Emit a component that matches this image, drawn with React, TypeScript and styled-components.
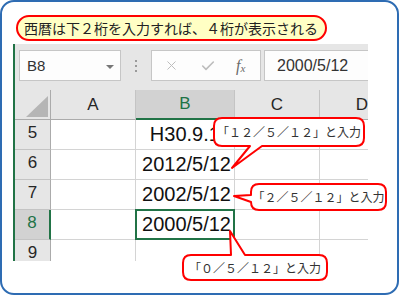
import React from "react";
import styled, { createGlobalStyle } from "styled-components";
import { X, Check } from "lucide-react";

const GlobalStyle = createGlobalStyle`
  html, body {
    margin: 0;
    padding: 0;
    background: #ffffff;
  }
  body {
    font-family: "Liberation Sans", "Noto Sans CJK JP", sans-serif;
  }
`;

const GREEN = "#217346";

type TailSide = "top" | "bottom" | "left";

interface CalloutData {
  x: number;
  y: number;
  w: number;
  h: number;
  side: TailSide;
  a: number;
  b: number;
  tx: number;
  ty: number;
  text: string;
}

const callouts: CalloutData[] = [
  { x: 213, y: 117, w: 152, h: 30, side: "bottom", a: 37, b: 49, tx: 19, ty: 51, text: "「１２／５／１２」と入力" },
  { x: 250, y: 183, w: 137, h: 28, side: "left", a: 12, b: 19, tx: -16, ty: 13, text: "「２／５／１２」と入力" },
  { x: 182, y: 254, w: 146, h: 27, side: "top", a: 49, b: 63, tx: 48, ty: -23, text: "「０／５／１２」と入力" },
];

// rounded box with a wedge tail, drawn clockwise
const calloutPath = (c: CalloutData) => {
  const r = 8;
  const x0 = 1;
  const y0 = 1;
  const x1 = c.w - 1;
  const y1 = c.h - 1;
  let d = `M ${x0 + r} ${y0}`;
  if (c.side === "top") d += ` L ${c.a} ${y0} L ${c.tx} ${c.ty} L ${c.b} ${y0}`;
  d += ` L ${x1 - r} ${y0} Q ${x1} ${y0} ${x1} ${y0 + r}`;
  d += ` L ${x1} ${y1 - r} Q ${x1} ${y1} ${x1 - r} ${y1}`;
  if (c.side === "bottom") d += ` L ${c.b} ${y1} L ${c.tx} ${c.ty} L ${c.a} ${y1}`;
  d += ` L ${x0 + r} ${y1} Q ${x0} ${y1} ${x0} ${y1 - r}`;
  if (c.side === "left") d += ` L ${x0} ${c.b} L ${c.tx} ${c.ty} L ${x0} ${c.a}`;
  d += ` L ${x0} ${y0 + r} Q ${x0} ${y0} ${x0 + r} ${y0} Z`;
  return d;
};

const columns = ["A", "B", "C", "D"];
const rows = [
  { n: 5, b: "H30.9.12" },
  { n: 6, b: "2012/5/12" },
  { n: 7, b: "2002/5/12" },
  { n: 8, b: "2000/5/12" },
  { n: 9, b: "" },
];

export default function App() {
  return (
    <>
      <GlobalStyle />
      <Page>
        <Frame>
          <Title>西暦は下２桁を入力すれば、４桁が表示される</Title>
          <Excel>
            <FormulaBar>
              <NameBox>
                B8
                <DropArrow />
              </NameBox>
              <Separator>
                <Dot />
                <Dot />
                <Dot />
              </Separator>
              <FxBox>
                <X size={15} strokeWidth={1.6} color="#bdbdbd" />
                <Check size={16} strokeWidth={2.4} color="#bdbdbd" />
                <Fx>
                  f<sub>x</sub>
                </Fx>
              </FxBox>
              <FormulaBox>2000/5/12</FormulaBox>
            </FormulaBar>
            <Grid>
              <Corner>
                <svg width="22" height="21" viewBox="0 0 22 21">
                  <polygon points="22,0 22,21 0,21" fill="#b5b5b5" />
                </svg>
              </Corner>
              {columns.map((c) => (
                <ColHead key={c} $active={c === "B"}>
                  {c}
                </ColHead>
              ))}
              {rows.map((r) => (
                <React.Fragment key={r.n}>
                  <RowHead $active={r.n === 8}>{r.n}</RowHead>
                  <Cell />
                  <Cell $active={r.n === 8}>{r.b}</Cell>
                  <Cell />
                  <Cell />
                </React.Fragment>
              ))}
            </Grid>
          </Excel>
        </Frame>

        {callouts.map((c, i) => (
          <Callout key={i} style={{ left: c.x, top: c.y, width: c.w, height: c.h }}>
            <svg width={c.w} height={c.h} style={{ overflow: "visible", position: "absolute", left: 0, top: 0 }}>
              <path d={calloutPath(c)} fill="#ffffff" stroke="#ff0000" strokeWidth={2} strokeLinejoin="round" />
            </svg>
            <CalloutText>{c.text}</CalloutText>
          </Callout>
        ))}
      </Page>
    </>
  );
}

const Page = styled.div`
  position: relative;
  width: 401px;
  height: 295px;
  overflow: hidden;
`;

const Frame = styled.div`
  box-sizing: border-box;
  width: 399px;
  height: 295px;
  border: 2px solid #2e6cb3;
  border-radius: 14px;
  padding: 13px 0 0 11px;
`;

const Title = styled.div`
  display: inline-flex;
  align-items: center;
  box-sizing: border-box;
  height: 26px;
  margin-left: 3px;
  padding: 0 7px 0 6px;
  border: 2px solid #ff0000;
  border-radius: 13px;
  background: #ffffc4;
  color: #222222;
  font-family: "Noto Sans CJK JP", sans-serif;
  font-size: 14px;
  line-height: 1;
`;

const Excel = styled.div`
  margin-top: 3px;
  width: 355px;
  height: 217px;
  overflow: hidden;
  background: #e6e6e6;
  border-left: 2px solid ${GREEN};
  box-sizing: border-box;
`;

const FormulaBar = styled.div`
  display: flex;
  align-items: flex-start;
  height: 46px;
  padding: 6px 0 0 4px;
  box-sizing: border-box;
`;

const Box = styled.div`
  box-sizing: border-box;
  height: 31px;
  background: #fdfdfd;
  border: 1px solid #c6c6c6;
  display: flex;
  align-items: center;
  color: #333333;
  font-family: "Liberation Sans", sans-serif;
`;

const NameBox = styled(Box)`
  position: relative;
  width: 102px;
  flex: none;
  padding-left: 7px;
  font-size: 15px;
`;

const DropArrow = styled.span`
  position: absolute;
  right: 6px;
  top: 14px;
  width: 0;
  height: 0;
  border-left: 4px solid transparent;
  border-right: 4px solid transparent;
  border-top: 4px solid #777777;
`;

const Separator = styled.div`
  width: 30px;
  height: 31px;
  flex: none;
  display: flex;
  flex-direction: column;
  align-items: center;
  justify-content: center;
  gap: 3px;
`;

const Dot = styled.span`
  width: 2px;
  height: 2px;
  background: #9a9a9a;
`;

const FxBox = styled(Box)`
  width: 110px;
  flex: none;
  padding: 0 0 0 12px;
  gap: 21px;
`;

const Fx = styled.span`
  font-family: "Liberation Serif", serif;
  font-style: italic;
  font-size: 16px;
  color: #6a6a6a;
  margin-left: -1px;

  sub {
    font-size: 11px;
    vertical-align: -1px;
  }
`;

const FormulaBox = styled(Box)`
  width: 200px;
  flex: none;
  margin-left: 3px;
  padding-left: 12px;
  font-size: 16px;
`;

const Grid = styled.div`
  display: grid;
  grid-template-columns: 36px 85px 99px 85px 85px;
  grid-template-rows: repeat(6, 30px);
  font-family: "Liberation Sans", sans-serif;
`;

const Corner = styled.div`
  background: #e6e6e6;
  border-right: 1px solid #ababab;
  border-bottom: 1px solid #ababab;
  display: flex;
  align-items: flex-end;
  justify-content: flex-end;
  padding: 0 2px 2px 0;
`;

const ColHead = styled.div<{ $active?: boolean }>`
  display: flex;
  align-items: center;
  justify-content: center;
  background: ${(p) => (p.$active ? "#d2d2d2" : "#e6e6e6")};
  color: ${(p) => (p.$active ? GREEN : "#262626")};
  border-right: 1px solid #c4c4c4;
  border-bottom: ${(p) => (p.$active ? `2px solid ${GREEN}` : "1px solid #ababab")};
  font-size: 17px;
`;

const RowHead = styled.div<{ $active?: boolean }>`
  display: flex;
  align-items: center;
  justify-content: center;
  padding-bottom: 3px;
  box-sizing: border-box;
  background: ${(p) => (p.$active ? "#d2d2d2" : "#e6e6e6")};
  color: ${(p) => (p.$active ? GREEN : "#262626")};
  border-right: ${(p) => (p.$active ? `2px solid ${GREEN}` : "1px solid #ababab")};
  border-bottom: 1px solid #c4c4c4;
  font-size: 17px;
`;

const Cell = styled.div<{ $active?: boolean }>`
  box-sizing: border-box;
  display: flex;
  align-items: center;
  justify-content: flex-end;
  padding-right: 3px;
  background: #ffffff;
  border-right: 1px solid #d4d4d4;
  border-bottom: 1px solid #d4d4d4;
  color: #111111;
  font-size: 20px;
  white-space: nowrap;
  ${(p) =>
    p.$active &&
    `
    border: 2px solid ${GREEN};
    margin: -1px 0 0 -1px;
    padding-right: 2px;
  `}
`;

const Callout = styled.div`
  position: absolute;
  display: flex;
  align-items: center;
  justify-content: center;
`;

const CalloutText = styled.span`
  position: relative;
  font-family: "Noto Sans CJK JP", sans-serif;
  font-size: 12px;
  color: #333333;
  line-height: 1;
`;
